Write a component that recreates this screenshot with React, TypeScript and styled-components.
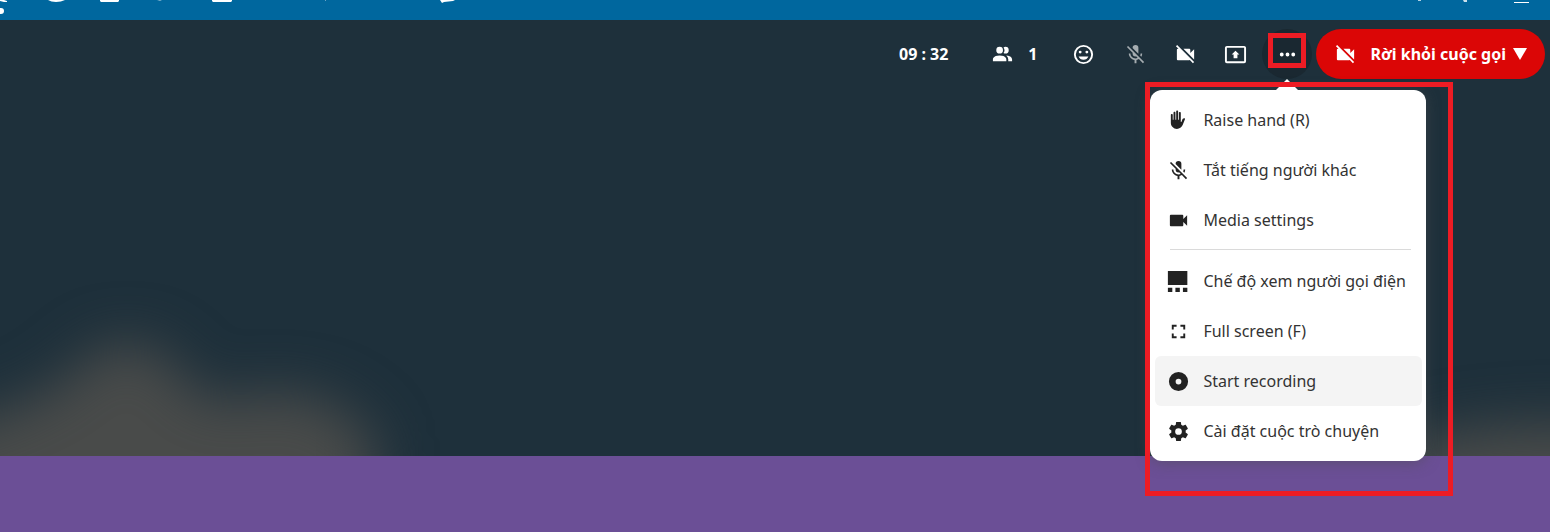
import React from "react";
import styled, { createGlobalStyle } from "styled-components";

const GlobalStyle = createGlobalStyle`
  * { box-sizing: border-box; }
  body {
    margin: 0;
    background: #6b4f96;
    font-family: "Noto Sans", "Open Sans", sans-serif;
    font-size: 16px;
    line-height: 24px;
  }
  button { font: inherit; border: 0; margin: 0; cursor: pointer; }
`;

const Page = styled.div`
  display: flex;
  flex-direction: column;
  min-height: 100vh;
  overflow: hidden;
`;

const BrandBar = styled.header`
  display: flex;
  justify-content: space-between;
  height: 20px;
  background: #00679e;
  overflow: hidden;
`;

const Stage = styled.main`
  position: relative;
  flex: 1;
  background: #1e303b;
`;

const Backdrop = styled.div`
  position: absolute;
  inset: 0;
  overflow: hidden;
  display: flex;
  justify-content: space-between;
  align-items: flex-end;
`;

const Footer = styled.footer`
  height: 76px;
  background: #6b4f96;
`;

const Toolbar = styled.div`
  position: relative;
  display: flex;
  justify-content: flex-end;
  align-items: center;
  gap: 2px;
  padding: 9px 5px;
  color: #fff;
  font-weight: 700;
`;

const CallTime = styled.time`
  margin-right: 22px;
`;

const ToolButton = styled.button<{ $active?: boolean; $muted?: boolean }>`
  display: flex;
  align-items: center;
  justify-content: center;
  width: 50px;
  height: 50px;
  padding: 0;
  border-radius: 25px;
  color: #fff;
  background: ${(p) => (p.$active ? "#1a2831" : "transparent")};
  svg { opacity: ${(p) => (p.$muted ? 0.6 : 1)}; }
`;

const PeopleButton = styled(ToolButton)`
  width: 84px;
  gap: 14px;
  font-weight: 700;
`;

const MediaGroup = styled.div`
  display: flex;
`;

const MenuAnchor = styled.div`
  position: relative;
  margin-right: 2px;
`;

const LeaveButton = styled.button`
  display: flex;
  align-items: center;
  gap: 13px;
  height: 50px;
  padding: 0 18px;
  border-radius: 25px;
  background: #db0606;
  color: #fff;
  && { font-weight: 700; }
`;

const LeaveLabel = styled.span`
  display: flex;
  align-items: center;
  gap: 7px;
  white-space: nowrap;
`;

const Menu = styled.div`
  position: absolute;
  z-index: 2;
  top: 61px;
  right: -114px;
  width: 276px;
  padding: 5px;
  border-radius: 12px;
  background: #fff;
  color: #222;
  font-weight: 400;
  box-shadow: 0 2px 14px rgba(77, 77, 77, 0.5);
`;

const Arrow = styled.svg`
  position: absolute;
  top: -11px;
  right: 127px;
`;

const MenuItem = styled.button<{ $hover?: boolean }>`
  display: flex;
  align-items: center;
  gap: 13px;
  width: 267px;
  height: 50px;
  padding: 0 12px;
  border-radius: 6px;
  background: ${(p) => (p.$hover ? "#f4f4f4" : "transparent")};
  color: #333;
  white-space: nowrap;
  svg { color: #222; }
`;

const Divider = styled.hr`
  margin: 4px 10px 6px 15px;
  border: 0;
  border-top: 1px solid #dadada;
`;

const Highlight = styled.div<{ $inset: string }>`
  position: absolute;
  z-index: 3;
  inset: ${(p) => p.$inset};
  border: 5px solid #ed1c24;
  pointer-events: none;
`;

const paths = {
  hand: "M11 24C14.26 24 17.19 22 18.4 19L21.43 11.37C21.74 10.58 21 9.79 20.19 10.05L19.4 10.31C18.84 10.5 18.38 10.92 18.16 11.47L16.75 15H16V3.25C16 2.56 15.44 2 14.75 2S13.5 2.56 13.5 3.25V12H12.5V1.25C12.5 .56 11.94 0 11.25 0S10 .56 10 1.25V12H9V2.75C9 2.06 8.44 1.5 7.75 1.5S6.5 2.06 6.5 2.75V12H5.5V5.75C5.5 5.06 4.94 4.5 4.25 4.5S3 5.06 3 5.75V16C3 20.42 6.58 24 11 24Z",
  micOff:
    "M19,11C19,12.19 18.66,13.3 18.1,14.28L16.87,13.05C17.14,12.43 17.3,11.74 17.3,11H19M15,11.16L9,5.18V5A3,3 0 0,1 12,2A3,3 0 0,1 15,5V11L15,11.16M4.27,3L21,19.73L19.73,21L15.54,16.81C14.77,17.27 13.91,17.58 13,17.72V21H11V17.72C7.72,17.23 5,14.41 5,11H6.7C6.7,14 9.24,16.1 12,16.1C12.81,16.1 13.6,15.91 14.31,15.58L12.65,13.92L12,14A3,3 0 0,1 9,11V10.28L3,4.27L4.27,3Z",
  video:
    "M17,10.5V7A1,1 0 0,0 16,6H4A1,1 0 0,0 3,7V17A1,1 0 0,0 4,18H16A1,1 0 0,0 17,17V13.5L21,17.5V6.5L17,10.5Z",
  videoOff:
    "M3.27,2L2,3.27L4.73,6H4A1,1 0 0,0 3,7V17A1,1 0 0,0 4,18H16C16.2,18 16.39,17.92 16.54,17.82L19.73,21L21,19.73M21,6.5L17,10.5V7A1,1 0 0,0 16,6H9.82L21,17.18V6.5Z",
  people:
    "M16 17V19H2V17S2 13 9 13 16 17 16 17M12.5 7.5A3.5 3.5 0 1 0 9 11A3.5 3.5 0 0 0 12.5 7.5M15.94 13A5.32 5.32 0 0 1 18 17V19H22V17S22 13.37 15.94 13M15 4A3.39 3.39 0 0 0 13.07 4.59A5 5 0 0 1 13.07 10.41A3.39 3.39 0 0 0 15 11A3.5 3.5 0 0 0 15 4Z",
  smile:
    "M12,17.5C14.33,17.5 16.3,16.04 17.11,14H6.89C7.69,16.04 9.67,17.5 12,17.5M8.5,11A1.5,1.5 0 0,0 10,9.5A1.5,1.5 0 0,0 8.5,8A1.5,1.5 0 0,0 7,9.5A1.5,1.5 0 0,0 8.5,11M15.5,11A1.5,1.5 0 0,0 17,9.5A1.5,1.5 0 0,0 15.5,8A1.5,1.5 0 0,0 14,9.5A1.5,1.5 0 0,0 15.5,11M12,20A8,8 0 0,1 4,12A8,8 0 0,1 12,4A8,8 0 0,1 20,12A8,8 0 0,1 12,20M12,2A10,10 0 0,0 2,12A10,10 0 0,0 12,22A10,10 0 0,0 22,12A10,10 0 0,0 12,2Z",
  present:
    "M21,3H3C1.89,3 1,3.89 1,5V19A2,2 0 0,0 3,21H21A2,2 0 0,0 23,19V5C23,3.89 22.1,3 21,3M21,19H3V5H21V19M10,12H8L12,8L16,12H14V16H10V12Z",
  dots: "M16,12A2,2 0 0,1 18,10A2,2 0 0,1 20,12A2,2 0 0,1 18,14A2,2 0 0,1 16,12M10,12A2,2 0 0,1 12,10A2,2 0 0,1 14,12A2,2 0 0,1 12,14A2,2 0 0,1 10,12M4,12A2,2 0 0,1 6,10A2,2 0 0,1 8,12A2,2 0 0,1 6,14A2,2 0 0,1 4,12Z",
  speaker: "M1 1H23V17H1ZM1 20H6V25H1ZM9.500 20H14.500V25H9.500ZM18 20H23V25H18Z",
  fullscreen:
    "M5,5H10V7H7V10H5V5M14,5H19V10H17V7H14V5M17,14H19V19H14V17H17V14M10,17V19H5V14H7V17H10Z",
  record:
    "M12,2A10,10 0 0,0 2,12A10,10 0 0,0 12,22A10,10 0 0,0 22,12A10,10 0 0,0 12,2M12,9A3,3 0 0,1 15,12A3,3 0 0,1 12,15A3,3 0 0,1 9,12A3,3 0 0,1 12,9Z",
  cog: "M12,15.5A3.5,3.5 0 0,1 8.5,12A3.5,3.5 0 0,1 12,8.5A3.5,3.5 0 0,1 15.5,12A3.5,3.5 0 0,1 12,15.5M19.43,12.97C19.47,12.65 19.5,12.33 19.5,12C19.5,11.67 19.47,11.34 19.43,11L21.54,9.37C21.73,9.22 21.78,8.95 21.66,8.73L19.66,5.27C19.54,5.05 19.27,4.96 19.05,5.05L16.56,6.05C16.04,5.66 15.5,5.32 14.87,5.07L14.5,2.42C14.46,2.18 14.25,2 14,2H10C9.75,2 9.54,2.18 9.5,2.42L9.13,5.07C8.5,5.32 7.96,5.66 7.44,6.05L4.95,5.05C4.73,4.96 4.46,5.05 4.34,5.27L2.34,8.73C2.21,8.95 2.27,9.22 2.46,9.37L4.57,11C4.53,11.34 4.5,11.67 4.5,12C4.5,12.33 4.53,12.65 4.57,12.97L2.46,14.63C2.27,14.78 2.21,15.05 2.34,15.27L4.34,18.73C4.46,18.95 4.73,19.03 4.95,18.95L7.44,17.94C7.96,18.34 8.5,18.68 9.13,18.93L9.5,21.58C9.54,21.82 9.75,22 10,22H14C14.25,22 14.46,21.82 14.5,21.58L14.87,18.93C15.5,18.67 16.04,18.34 16.56,17.94L19.05,18.95C19.27,19.03 19.54,18.95 19.66,18.73L21.66,15.27C21.78,15.05 21.73,14.78 21.54,14.63L19.43,12.97Z",
};

type IconName = keyof typeof paths;

const viewBoxes: Partial<Record<IconName, string>> = {
  hand: "-2 -2 30 30",
  speaker: "0 0 26 26",
};

function Icon({ name }: { name: IconName }) {
  return (
    <svg width="23" height="23" viewBox={viewBoxes[name] ?? "0 0 24 24"} fill="currentColor" aria-hidden="true">
      <path d={paths[name]} />
    </svg>
  );
}

type Entry = { icon: IconName; label: string; hover?: boolean };

const callActions: Entry[] = [
  { icon: "hand", label: "Raise hand (R)" },
  { icon: "micOff", label: "Tắt tiếng người khác" },
  { icon: "video", label: "Media settings" },
];

const viewActions: Entry[] = [
  { icon: "speaker", label: "Chế độ xem người gọi điện" },
  { icon: "fullscreen", label: "Full screen (F)" },
  { icon: "record", label: "Start recording", hover: true },
  { icon: "cog", label: "Cài đặt cuộc trò chuyện" },
];

function Items({ entries }: { entries: Entry[] }) {
  return (
    <>
      {entries.map((e) => (
        <MenuItem key={e.label} type="button" role="menuitem" $hover={e.hover}>
          <Icon name={e.icon} />
          {e.label}
        </MenuItem>
      ))}
    </>
  );
}

export default function App() {
  return (
    <Page>
      <GlobalStyle />
      <BrandBar>
        <svg width="460" height="20" fill="#fff" aria-hidden="true">
          <path d="M0 0H4L7 1V2H4L0 1Z" />
          <circle cx="1" cy="11" r="3" />
          <path d="M48 0H65Q61 2 56 2Q51 2 48 0Z" />
          <path d="M100 0H119V1L118 2H101L100 1Z" />
          <path d="M157 0H162L160 1Z" opacity="0.5" />
          <path d="M212 0H232V1L231 2H213L212 1Z" />
          <path d="M325 0H326V1H325Z" opacity="0.4" />
          <path d="M440 0H455L453 1L444 2L442 3Z" />
        </svg>
        <svg width="134" height="20" fill="#fff" aria-hidden="true">
          <path d="M2 0H5V1H2Z" opacity="0.7" />
          <path d="M47 0H51V2H48Z" opacity="0.8" />
          <path d="M98 2H113V3H98Z" />
        </svg>
      </BrandBar>
      <Stage>
        <Backdrop>
          <svg width="520" height="200" aria-hidden="true">
            <defs>
              <filter id="soft" x="-50%" y="-50%" width="200%" height="200%" colorInterpolationFilters="sRGB">
                <feGaussianBlur stdDeviation="27" />
              </filter>
            </defs>
            <path
              d="M-90 180Q30 155 75 115Q125 60 175 110Q200 145 225 145Q320 115 375 185V300H-90Z"
              fill="#494b4a"
              filter="url(#soft)"
            />
          </svg>
          <svg width="200" height="160" aria-hidden="true">
            <path d="M50 150Q130 120 290 130V260H50Z" fill="#494b4a" filter="url(#soft)" />
          </svg>
        </Backdrop>
        <Toolbar>
          <CallTime>09 : 32</CallTime>
          <PeopleButton type="button" aria-label="Participants">
            <Icon name="people" />
            <span>1</span>
          </PeopleButton>
          <ToolButton type="button" aria-label="Reactions">
            <Icon name="smile" />
          </ToolButton>
          <MediaGroup>
            <ToolButton type="button" aria-label="Microphone" $muted>
              <Icon name="micOff" />
            </ToolButton>
            <ToolButton type="button" aria-label="Camera">
              <Icon name="videoOff" />
            </ToolButton>
            <ToolButton type="button" aria-label="Share screen">
              <Icon name="present" />
            </ToolButton>
          </MediaGroup>
          <MenuAnchor>
            <ToolButton type="button" aria-label="More actions" aria-haspopup="menu" $active>
              <Icon name="dots" />
            </ToolButton>
            <Highlight $inset="4px 6px 11px" />
            <Menu role="menu">
              <Arrow width="24" height="12" fill="#fff" aria-hidden="true">
                <path d="M12 0L24 12H0Z" />
              </Arrow>
              <Items entries={callActions} />
              <Divider />
              <Items entries={viewActions} />
              <Highlight $inset="-8px -27px -35px -5px" />
            </Menu>
          </MenuAnchor>
          <LeaveButton type="button">
            <Icon name="videoOff" />
            <LeaveLabel>
              Rời khỏi cuộc gọi
              <svg width="14" height="14" fill="currentColor" aria-hidden="true">
                <path d="M0 1H14L7 13Z" />
              </svg>
            </LeaveLabel>
          </LeaveButton>
        </Toolbar>
      </Stage>
      <Footer />
    </Page>
  );
}
